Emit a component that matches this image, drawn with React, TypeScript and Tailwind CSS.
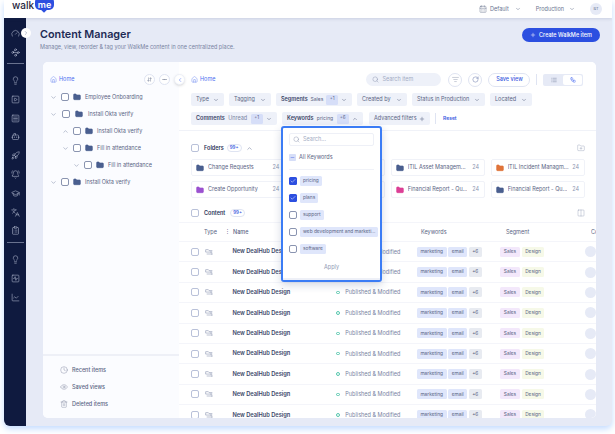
import type { ReactNode } from 'react'
import {
  Bot,
  BellRing,
  CalendarDays,
  Check,
  ChevronDown,
  ChevronLeft,
  ChevronRight,
  ChevronUp,
  ChartLine,
  ClipboardList,
  Clock,
  Ellipsis,
  Eye,
  FolderPlus,
  Gauge,
  GraduationCap,
  Folder,
  Home,
  Languages,
  Lightbulb,
  ListFilter,
  List,
  Minus,
  Plus,
  RotateCw,
  Rocket,
  Search,
  ArrowDownUp,
  SquareActivity,
  SquareMenu,
  SquarePlay,
  Trash2,
  Waypoints,
  Workflow,
  Columns2,
} from 'lucide-react'

const navTop = [Gauge, Waypoints]
const navMiddle = [Lightbulb, SquarePlay, SquareMenu, Bot, Rocket, BellRing, GraduationCap, Languages, ClipboardList]
const navBottom = [Lightbulb, SquareActivity, ChartLine]

const tree = [
  { label: 'Employee Onboarding', pad: 'pl-[7px] gap-[4px]', open: false },
  { label: 'Install Okta verify', pad: 'pl-[7px] gap-[5px]', open: false },
  { label: 'Install Okta verify', pad: 'pl-[19px] gap-[4px]', open: true },
  { label: 'Fill in attendance', pad: 'pl-[19px] gap-[4px]', open: false },
  { label: 'Fill in attendance', pad: 'pl-[30px] gap-[4px]', open: false },
  { label: 'Install Okta verify', pad: 'pl-[7px] gap-[4px]', open: false },
]

// cards 2 and 6 sit behind the open keywords menu
const folders = [
  { name: 'Change Requests', color: '#4a5f8f' },
  { name: '', color: '#4a5f8f' },
  { name: 'ITIL Asset Managem...', color: '#4a5f8f' },
  { name: 'ITIL Incident Managm...', color: '#e0743a' },
  { name: 'Create Opportunity', color: '#9b51d0' },
  { name: '', color: '#4a5f8f' },
  { name: 'Financial Report - Qu...', color: '#dc3f96' },
  { name: 'Financial Report - Qu...', color: '#4a5f8f' },
]

const keywords = [
  { label: 'pricing', checked: true },
  { label: 'plans', checked: true },
  { label: 'support', checked: false },
  { label: 'web development and marketi...', checked: false },
  { label: 'software', checked: false },
]

const rows = [0, 1, 2, 3, 4, 5, 6, 7, 8]

function Box({ tone = 'border-[#b9c1d9]' }: { tone?: string }) {
  return <span className={`block h-[8px] w-[8px] shrink-0 rounded-[2px] border bg-white ${tone}`} />
}

function FolderIcon({ color }: { color: string }) {
  return <Folder size={8} fill={color} stroke={color} className="shrink-0" />
}

function Chip({ width, children }: { width: string; children: ReactNode }) {
  return (
    <div className={`flex h-[13px] shrink-0 items-center justify-between rounded-[2px] bg-[#eef1f9] px-[5px] text-[5.5px] text-[#5a6584] ${width}`}>
      {children}
    </div>
  )
}

function TypeIcon() {
  return (
    <svg viewBox="0 0 12 9" className="h-[6px] w-[8px] shrink-0" fill="none" stroke="#8d97b2" strokeWidth="0.9">
      <path d="M1 1h4l1 1.4h5M1 1v3.6h10M2.5 7.5h8.5" />
      <path d="M9 3.4v2.4M9.6 6.3l1.4 1.2-1.4 1.2" />
    </svg>
  )
}

function Tag({ className, children }: { className: string; children: ReactNode }) {
  return (
    <span className={`flex h-[10px] items-center justify-center rounded-[1.5px] text-[4.8px] text-[#5a6584] ${className}`}>
      {children}
    </span>
  )
}

export default function App() {
  return (
    <div className="h-[434px] w-[615px] overflow-hidden bg-white pb-[8px] pl-[4px] pr-[3px] font-['Inter',sans-serif] text-[#2a3557]">
      <div className="relative flex h-[426px] flex-col overflow-hidden rounded-b-[6px] bg-[#e6eaf6] shadow-[0_3px_6px_#c4dcff]">
        <header className="relative z-10 flex h-[18px] shrink-0 items-center bg-white pl-[8px] pr-[10px] shadow-[0_1px_3px_rgba(40,60,110,0.15)]">
          <div className="flex h-[18px] items-start">
            <span className="mt-[-2px] text-[10px] font-medium leading-[14px] text-[#1f2640]">walk</span>
            <span className="relative mt-[-3px] ml-px flex h-[13px] w-[19px] items-center justify-center rounded-[5px] bg-[#2c4fe0] pt-[2px] text-[9px] font-semibold leading-none text-white">
              me
              <span className="absolute bottom-[-2px] left-[7px] h-[4px] w-[4px] rotate-45 bg-[#2c4fe0]" />
            </span>
          </div>
          <div className="ml-auto flex items-center text-[5.5px] text-[#69748f]">
            <CalendarDays size={8} strokeWidth={1.4} className="mr-[3px]" />
            <span>Default</span>
            <ChevronDown size={6} className="ml-[6px] mr-[15px]" />
            <span>Production</span>
            <ChevronDown size={6} className="ml-[5px] mr-[15px]" />
            <span className="flex h-[12px] w-[12px] items-center justify-center rounded-full bg-[#e6eaf6] text-[4px]">BT</span>
          </div>
        </header>

        <div className="flex min-h-0 flex-1">
          <nav className="relative flex w-[22px] shrink-0 flex-col items-center bg-[#0f1a3f] pt-[5.5px] text-[#c9d0e4]">
            {navTop.map((Icon, i) => (
              <span key={i} className="flex h-[19px] items-center">
                <Icon size={9} strokeWidth={1.3} />
              </span>
            ))}
            <div className="my-[1.5px] h-px w-[17px] bg-[#69728f]" />
            <div className="h-[5.6px]" />
            {navMiddle.map((Icon, i) => (
              <span key={i} className="flex h-[18.8px] items-center">
                <Icon size={9} strokeWidth={1.3} />
              </span>
            ))}
            <div className="my-[2px] h-px w-[17px] bg-[#69728f]" />
            <div className="h-[4.5px]" />
            {navBottom.map((Icon, i) => (
              <span key={i} className="flex h-[19px] items-center">
                <Icon size={9} strokeWidth={1.3} />
              </span>
            ))}
          </nav>

          <main className="flex min-w-0 flex-1 flex-col">
            <div className="flex h-[44px] shrink-0 items-start justify-between pl-[14px] pr-[12px]">
              <div className="pt-[10px]">
                <h1 className="text-[10.8px] font-semibold leading-[14px] text-[#1d2a55]">Content Manager</h1>
                <p className="mt-[1px] text-[5.5px] leading-[8px] text-[#7a85a3]">
                  Manage, view, reorder &amp; tag your WalkMe content in one centralized place.
                </p>
              </div>
              <button
                type="button"
                className="mt-[10px] flex h-[14px] w-[78px] items-center justify-center gap-[3px] rounded-full bg-[#2c4fe0] text-[5.5px] font-medium text-white"
              >
                <Plus size={6} />
                Create WalkMe item
              </button>
            </div>

            <section className="ml-[17px] mr-[16px] flex h-[355.5px] min-h-0 overflow-hidden rounded-[5px] bg-white">
              <aside className="flex w-[136px] shrink-0 flex-col bg-[#fbfcff]">
                <div className="flex h-[26px] shrink-0 items-center pl-[7px] pr-[9px] pt-[8px] text-[5.5px] text-[#4d6ff0]">
                  <Home size={7} strokeWidth={1.3} className="mr-[2px]" />
                  Home
                  <span className="ml-auto flex h-[11px] w-[11px] items-center justify-center rounded-full border border-[#dfe4f2] bg-white text-[#5a6584]">
                    <ArrowDownUp size={5} />
                  </span>
                  <span className="ml-[4px] flex h-[11px] w-[11px] items-center justify-center rounded-full border border-[#dfe4f2] bg-white text-[#5a6584]">
                    <Ellipsis size={5} />
                  </span>
                </div>
                <ul className="flex-1 pt-[0.5px]">
                  {tree.map((node, i) => (
                    <li key={i} className={`flex h-[17px] items-center text-[5.5px] text-[#5a6584] ${node.pad}`}>
                      {node.open ? (
                        <ChevronUp size={7} className="shrink-0 text-[#8d97b2]" />
                      ) : (
                        <ChevronDown size={7} className="shrink-0 text-[#8d97b2]" />
                      )}
                      <Box tone="border-[#8a94b0]" />
                      <FolderIcon color="#4a5f8f" />
                      <span>{node.label}</span>
                    </li>
                  ))}
                </ul>
                <div className="h-[64px] shrink-0 border-t-2 border-[#eef0f7] pl-[17px] pt-[6px] text-[5.5px] font-medium text-[#5a6584]">
                  <div className="flex h-[17px] items-center gap-[4px]">
                    <Clock size={8} strokeWidth={1} />
                    Recent items
                  </div>
                  <div className="flex h-[17px] items-center gap-[4px]">
                    <Eye size={8} strokeWidth={1} />
                    Saved views
                  </div>
                  <div className="flex h-[17px] items-center gap-[4px]">
                    <Trash2 size={8} strokeWidth={1} />
                    Deleted items
                  </div>
                </div>
              </aside>

              <div className="relative min-w-0 flex-1 overflow-hidden bg-white">
                <div className="h-[69px] border-b border-[#f0f2f8] pl-[12px] pr-[10px]">
                  <div className="flex h-[31px] items-center pt-[4px] text-[5.5px]">
                    <Home size={7} strokeWidth={1.3} className="mr-[2px] text-[#4d6ff0]" />
                    <span className="text-[#4d6ff0]">Home</span>
                    <div className="ml-[151px] flex h-[13px] w-[75px] items-center gap-[3px] rounded-full bg-[#eef1f9] px-[6px] text-[#a3acc4]">
                      <Search size={7} strokeWidth={1.3} className="text-[#7a85a3]" />
                      Search item
                    </div>
                    <span className="ml-[7px] flex h-[14px] w-[14px] items-center justify-center rounded-full border border-[#dfe4f2] text-[#6b7693]">
                      <ListFilter size={7} strokeWidth={1.2} />
                    </span>
                    <span className="ml-[6px] flex h-[14px] w-[14px] items-center justify-center rounded-full border border-[#dfe4f2] text-[#2a3f88]">
                      <RotateCw size={7} strokeWidth={1.2} />
                    </span>
                    <span className="ml-[6px] flex h-[14px] w-[42px] items-center justify-center rounded-full border border-[#dfe4f2] font-medium text-[#3a5ae0]">
                      Save view
                    </span>
                    <span className="ml-[6px] h-[11px] w-px bg-[#dfe4f2]" />
                    <div className="ml-[6px] flex h-[12px] w-[40px] rounded-[2px] bg-[#e6eaf6] p-px">
                      <span className="flex flex-1 items-center justify-center text-[#7a85a3]">
                        <List size={6} />
                      </span>
                      <span className="flex flex-1 items-center justify-center rounded-[2px] bg-white text-[#4d6ff0]">
                        <Workflow size={6} />
                      </span>
                    </div>
                  </div>
                  <div className="flex gap-[5px]">
                    <Chip width="w-[33px]">
                      Type <ChevronDown size={6} />
                    </Chip>
                    <Chip width="w-[42px]">
                      Tagging <ChevronDown size={6} />
                    </Chip>
                    <Chip width="w-[76px]">
                      <b className="font-semibold text-[#3a4568]">Segments</b>
                      <span className="text-[5px]">Sales</span>
                      <span className="flex h-[10px] w-[12px] items-center justify-center rounded-[1.5px] bg-[#d6def8] text-[4.5px]">+1</span>
                      <ChevronDown size={6} />
                    </Chip>
                    <Chip width="w-[50px]">
                      Created by <ChevronDown size={6} />
                    </Chip>
                    <Chip width="w-[73px]">
                      Status in Production <ChevronDown size={6} />
                    </Chip>
                    <Chip width="w-[42px]">
                      Located <ChevronDown size={6} />
                    </Chip>
                  </div>
                  <div className="mt-[6px] flex items-center gap-[5px]">
                    <Chip width="w-[86px]">
                      <b className="font-semibold text-[#3a4568]">Comments</b>
                      <span className="text-[#7a85a3]">Unread</span>
                      <span className="flex h-[10px] w-[12px] items-center justify-center rounded-[1.5px] bg-[#d6def8] text-[4.5px]">+1</span>
                      <ChevronDown size={6} />
                    </Chip>
                    <Chip width="w-[81px]">
                      <b className="font-semibold text-[#3a4568]">Keywords</b>
                      <span className="text-[5px]">pricing</span>
                      <span className="flex h-[10px] w-[12px] items-center justify-center rounded-[1.5px] bg-[#d6def8] text-[4.5px]">+6</span>
                      <ChevronUp size={6} />
                    </Chip>
                    <Chip width="ml-[1px] w-[61px]">
                      Advanced filters <Plus size={6} />
                    </Chip>
                    <span className="h-[11px] w-px bg-[#dfe4f2]" />
                    <span className="ml-[2px] text-[5px] font-semibold text-[#3a5ae0]">Reset</span>
                  </div>
                </div>

                <div className="pl-[12px] pr-[11px]">
                  <div className="flex h-[28px] items-center pt-[6px] text-[5.5px] font-semibold">
                    <Box />
                    <span className="ml-[5px]">Folders</span>
                    <span className="ml-[3px] rounded-full border border-[#dfe4f2] px-[2px] text-[4.5px] leading-[6px] text-[#3a5ae0]">99+</span>
                    <ChevronUp size={7} className="ml-[4px] text-[#7a85a3]" />
                    <FolderPlus size={8} strokeWidth={1} className="ml-auto text-[#7a85a3]" />
                  </div>
                  <div className="grid grid-cols-4 gap-x-[5.5px] gap-y-[5px]">
                    {folders.map((f, i) => (
                      <div key={i} className="flex h-[17px] min-w-0 items-center rounded-[2px] border border-[#f0f2f8] pl-[4px] pr-[5px] text-[5.5px] text-[#5a6584]">
                        {f.name && <FolderIcon color={f.color} />}
                        <span className="ml-[4px] truncate">{f.name}</span>
                        {f.name && <span className="ml-auto pl-[2px] text-[#8d97b2]">24</span>}
                      </div>
                    ))}
                  </div>
                  <div className="flex h-[24px] items-center pt-[6px] text-[5.5px] font-semibold">
                    <Box />
                    <span className="ml-[5px]">Content</span>
                    <span className="ml-[5px] rounded-full border border-[#dfe4f2] px-[2px] text-[4.5px] leading-[6px] text-[#3a5ae0]">99+</span>
                    <Columns2 size={8} strokeWidth={1} className="ml-auto text-[#7a85a3]" />
                  </div>
                </div>

                <div className="grid h-[20px] grid-cols-[29px_104px_84px_85px_85px_1fr] items-center border-y border-[#f4f5fa] pl-[25px] text-[5.5px] text-[#5a6584]">
                  <span className="flex items-center gap-[8px]">
                    Type <span className="text-[5px]">⋮</span>
                  </span>
                  <span className="font-medium">Name</span>
                  <span />
                  <span>Keywords</span>
                  <span>Segment</span>
                  <span className="overflow-hidden">Comments</span>
                </div>

                {rows.map(row => (
                  <div key={row} className="flex h-[20.4px] items-center border-b border-[#f4f5fa] pl-[12px] text-[5.5px]">
                    <Box />
                    <span className="ml-[6px] w-[28px]">
                      <TypeIcon />
                    </span>
                    <span className="w-[104px] text-[5.7px] font-semibold text-[#3a4568]">New DealHub Design</span>
                    <span className="flex w-[84px] items-center whitespace-nowrap pl-[2px] text-[#7a85a3]">
                      <span className="mr-[5.5px] h-[3.5px] w-[3.5px] shrink-0 rounded-full border border-[#55c7ad]" />
                      Published &amp; Modified
                    </span>
                    <span className="flex w-[85px] gap-[1.5px]">
                      <Tag className="w-[30px] bg-[#dfe6fb]">marketing</Tag>
                      <Tag className="w-[19px] bg-[#dfe6fb]">email</Tag>
                      <Tag className="w-[13px] bg-[#e8ebf1]">+6</Tag>
                    </span>
                    <span className="flex gap-[2px]">
                      <Tag className="w-[20px] bg-[#f3e8fb]">Sales</Tag>
                      <Tag className="w-[22px] bg-[#f6f9e8]">Design</Tag>
                    </span>
                    <span className="ml-[41px] h-[11px] w-[11px] shrink-0 rounded-full bg-[#e6eaf6]" />
                  </div>
                ))}

                <div className="absolute left-[102px] top-[64px] flex h-[156px] w-[101px] flex-col overflow-hidden rounded-[3px] border-2 border-[#3b7cf5] bg-white shadow-[0_3px_8px_rgba(40,60,110,0.2)]">
                  <div className="mx-[6px] mt-[5px] flex h-[13px] shrink-0 items-center gap-[3px] rounded-[2px] border border-[#eef0f7] px-[3px] text-[5.5px] text-[#a3acc4]">
                    <Search size={7} strokeWidth={1.3} className="text-[#7a85a3]" />
                    Search...
                  </div>
                  <div className="mx-[6px] mt-[5px] flex h-[19px] shrink-0 items-center gap-[3px] border-b border-[#f0f2f8] pb-[5px] text-[5.5px] text-[#5a6584]">
                    <span className="flex h-[7px] w-[7px] items-center justify-center rounded-[1px] bg-[#d6def8] text-[#3a5ae0]">
                      <Minus size={5} />
                    </span>
                    All Keywords
                  </div>
                  <div className="mt-[2px] flex flex-col">
                    {keywords.map(k => (
                      <div key={k.label} className="flex h-[17px] items-center gap-[3px] pl-[6px] text-[4.8px] text-[#5a6584]">
                        {k.checked ? (
                          <span className="flex h-[8px] w-[8px] items-center justify-center rounded-[1.5px] bg-[#2c4fe0] text-white">
                            <Check size={6} strokeWidth={2} />
                          </span>
                        ) : (
                          <Box tone="border-[#8a94b0]" />
                        )}
                        <span className="flex h-[10px] items-center whitespace-nowrap rounded-[1.5px] bg-[#dfe6fb] px-[3px]">{k.label}</span>
                      </div>
                    ))}
                  </div>
                  <div className="flex flex-1 items-center justify-center border-b-2 border-[#eef0f7] pb-[1px] text-[5.5px] text-[#8d97b2]">
                    Apply
                  </div>
                </div>
              </div>
            </section>
          </main>
        </div>

        <button
          type="button"
          className="absolute left-[17px] top-[28px] z-20 flex h-[10px] w-[10px] items-center justify-center rounded-full bg-white text-[#7a85a3]"
        >
          <ChevronRight size={6} />
        </button>
        <button
          type="button"
          className="absolute left-[170px] top-[74px] z-20 flex h-[11px] w-[11px] items-center justify-center rounded-full border border-[#edf0f8] bg-white text-[#4d6ff0] shadow-sm"
        >
          <ChevronLeft size={6} />
        </button>
      </div>
    </div>
  )
}
